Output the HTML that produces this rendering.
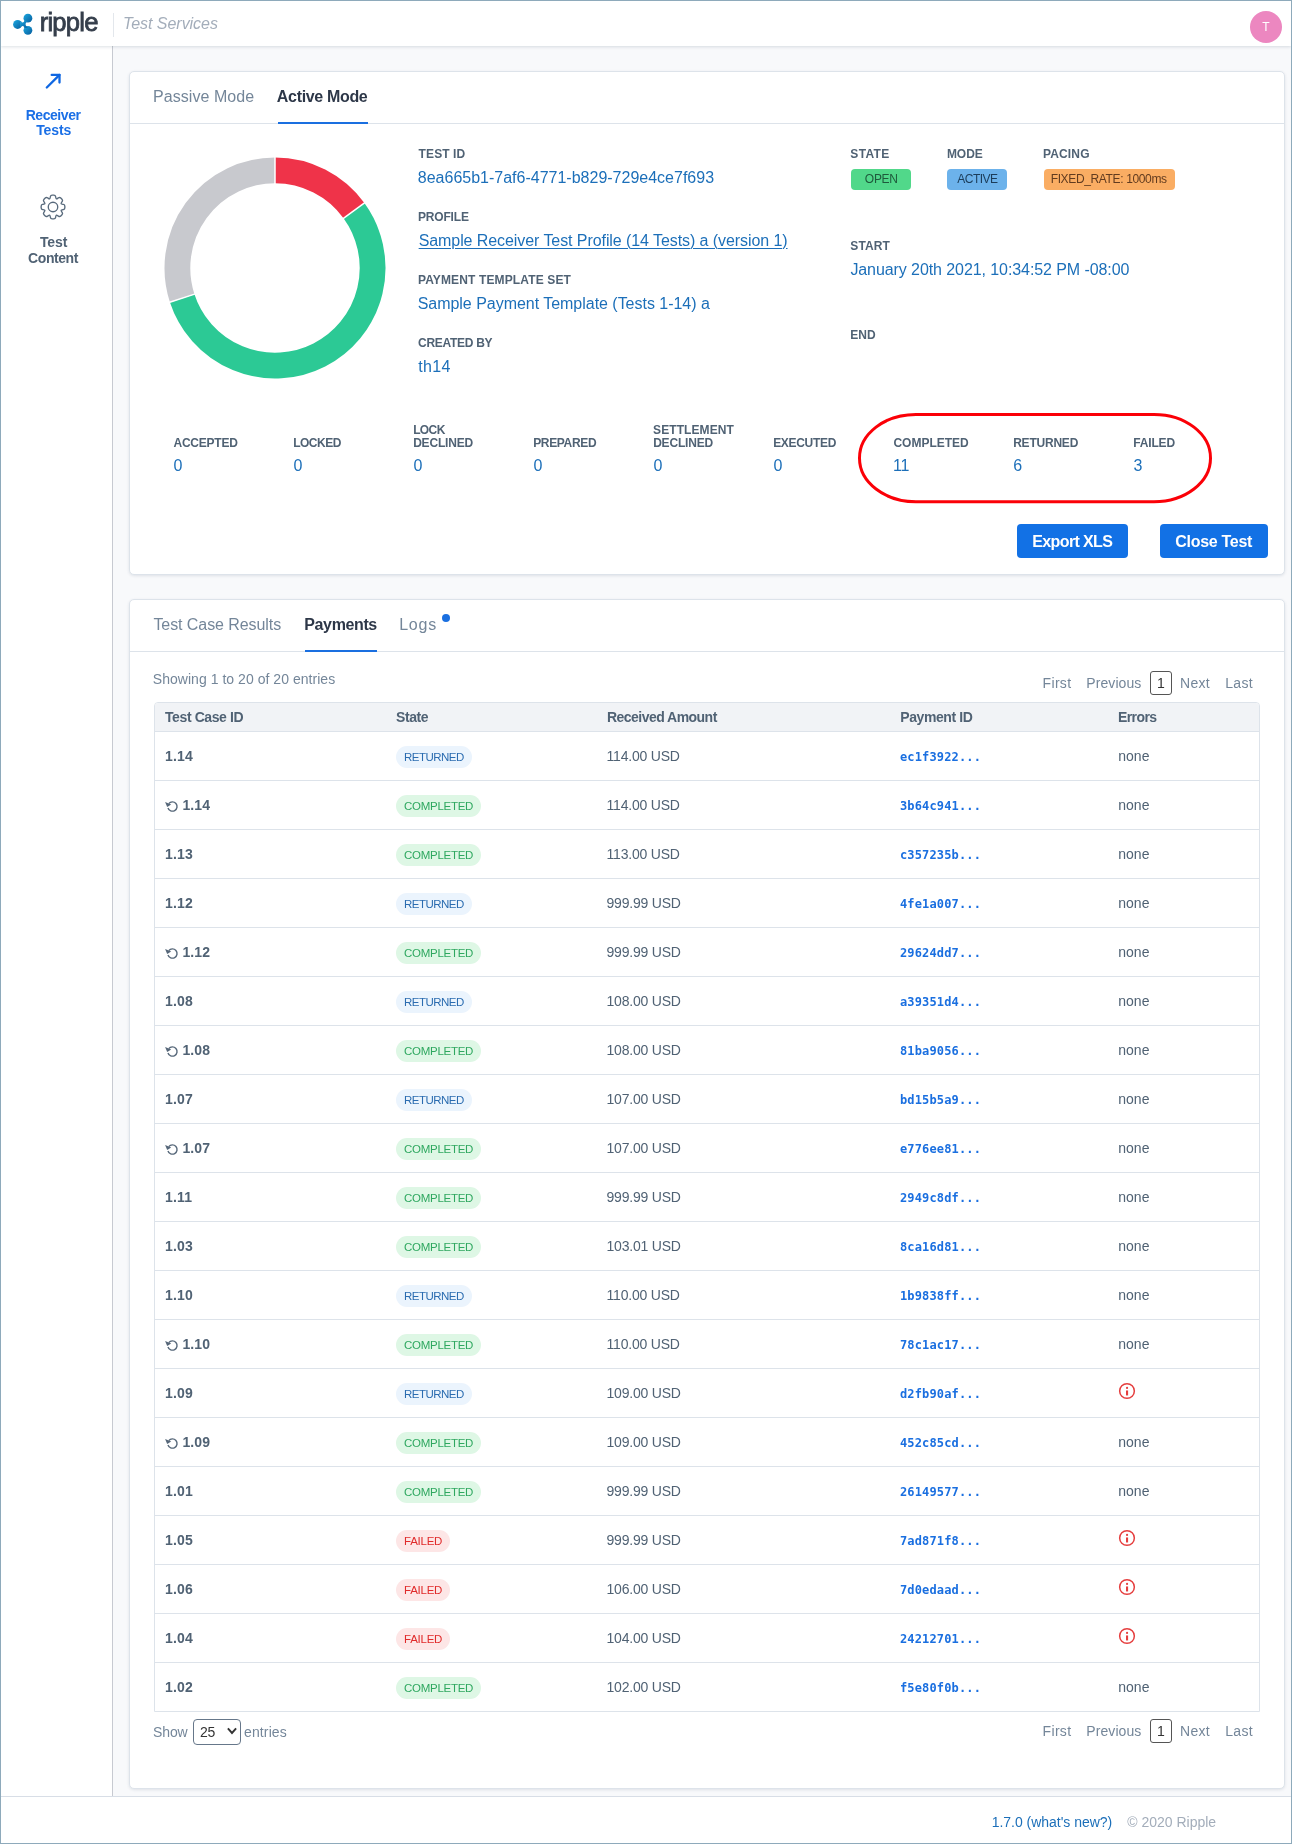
<!DOCTYPE html>
<html lang="en">
<head>
<meta charset="utf-8">
<title>Ripple Test Services</title>
<style>
*{box-sizing:border-box;margin:0;padding:0}
html,body{width:1292px;height:1844px;overflow:hidden;background:#f8f9fb}
body{position:relative;font-family:"Liberation Sans",Arial,sans-serif;color:#506274;font-size:14px}
.frame{position:absolute;left:0;top:0;width:1292px;height:1844px;border:1px solid #8eaabb;z-index:50;pointer-events:none}
header{position:absolute;left:1px;top:1px;width:1290px;height:45px;background:#fff;box-shadow:0 1px 3px rgba(40,60,90,.16);z-index:10}
nav{position:absolute;left:1px;top:46px;width:112px;height:1751px;background:#fff;border-right:1px solid #c7cad1}
footer{position:absolute;left:1px;top:1796px;width:1290px;height:47px;background:#fff;border-top:1px solid #d8dee6;z-index:5}
.abs{position:absolute;white-space:nowrap}
header,nav,section,footer{will-change:transform}
.card{position:absolute;left:129px;width:1156px;background:#fff;border:1px solid #dde3ea;border-radius:5px;box-shadow:0 1px 3px rgba(40,60,90,.12)}
.tabs{position:absolute;left:0;top:0;width:100%;height:52px;border-bottom:1px solid #dde3ea}
.ul{position:absolute;top:50px;height:2px;background:#1a6fe0}
.badge{position:absolute;top:97px;height:21px;border-radius:4px}
.btn{position:absolute;top:452px;height:34px;border-radius:4px;background:#1271e5}
table{position:absolute;left:24px;top:102px;width:1106px;border-collapse:separate;border-spacing:0;table-layout:fixed;border:1px solid #dde3ea;border-radius:4px 4px 0 0}
th{height:28px;background:#f1f3f6;text-align:left;font-size:14px;color:#506274;padding-left:10px;font-weight:bold;letter-spacing:-.4px}
th:first-child{border-radius:3px 0 0 0}th:last-child{border-radius:0 3px 0 0}
td{height:49px;border-top:1px solid #dde3ea;padding-left:10px;font-size:14px;color:#506274;vertical-align:middle}
td.id{font-weight:bold;letter-spacing:.15px}
td.amt{letter-spacing:-.2px;padding-left:9.5px}
td.pid{font-family:"DejaVu Sans Mono","Liberation Mono",monospace;font-weight:bold;font-size:12px;color:#1a6fe0;letter-spacing:.15px;padding-left:9px;padding-top:2px}
td.err{padding-left:9.3px}
.pill{display:inline-block;height:22px;line-height:22px;border-radius:11px;padding:0 0 0 8px;font-size:11.5px;vertical-align:middle;position:relative;top:1px}
.pill.r{background:#ebf4fd;color:#2b6cb0;width:76px;letter-spacing:-.52px}
.pill.c{background:#def7e5;color:#2fa860;width:85px;letter-spacing:-.27px}
.pill.f{background:#fde6e6;color:#e02b2b;width:54px;letter-spacing:-.24px}
.pgbox{position:absolute;width:22px;height:24px;border:1px solid #555;border-radius:3px;text-align:center;line-height:22px;font-size:14px;color:#333;background:#fff}
.retry{display:inline-block;vertical-align:-2.8px;margin-right:3.4px}
.info{display:block;position:relative;top:-2.35px;margin-left:-.5px}
</style>
</head>
<body>

<header>
  <svg class="abs" style="left:11px;top:11px" width="22" height="24" viewBox="12 12 22 24">
    <defs><linearGradient id="rg" x1="0" y1="0" x2="1" y2="1"><stop offset="0" stop-color="#1ba9e1"/><stop offset="1" stop-color="#075c9c"/></linearGradient></defs>
    <g fill="url(#rg)"><circle cx="17.6" cy="24.4" r="4.5"/><circle cx="27.9" cy="18.2" r="4.4"/><circle cx="27.9" cy="30.3" r="4.4"/>
    <path d="M20 21.6 C23 23.4 24 22.5 24.4 20.6 L28 21 C26 22.5 25.6 23.4 25.6 24.3 C25.6 25.3 26 26.2 28 27.6 L24.4 28 C24 26 23 25.2 20 27 Z"/></g>
  </svg>
  <div class="abs" id="logo" style="left:38.65px;top:4.33px;font-size:25.6px;line-height:34px;color:#353e4b;letter-spacing:-0.749px;-webkit-text-stroke:.8px #353e4b;">ripple</div>
  <div class="abs" style="left:112px;top:12px;width:1px;height:24px;background:#e3e7ec"></div>
  <div class="abs" id="ts" style="left:122.01px;top:12.76px;font-size:16px;line-height:20px;color:#a3adba;letter-spacing:-0.044px;font-style:italic;">Test Services</div>
  <div class="abs" style="left:1248.9px;top:10.1px;width:31.8px;height:31.8px;border-radius:16px;background:#ec87c0"></div>
  <div class="abs" id="av" style="left:1261.30px;top:18.94px;font-size:12px;line-height:15px;color:#fff;">T</div>
</header>

<nav>
  <svg class="abs" style="left:43px;top:26px" width="20" height="20" viewBox="44 72 20 20" fill="none" stroke="#0f67e2" stroke-width="2.3" stroke-linecap="round" stroke-linejoin="round"><path d="M46.8 87.5 L59.5 74.9"/><path d="M51.7 74.9 H59.5 V82.6"/></svg>
  <div class="abs" id="nav1a" style="left:24.64px;top:59.55px;font-size:14px;line-height:18px;color:#1a6fe6;font-weight:bold;letter-spacing:-0.440px;">Receiver</div>
  <div class="abs" id="nav1b" style="left:35.16px;top:75.25px;font-size:14px;line-height:18px;color:#1a6fe6;font-weight:bold;letter-spacing:-0.070px;">Tests</div>
  <svg class="abs" style="left:38.4px;top:146.6px" width="28" height="28" viewBox="-14 -14 28 28" fill="none" stroke="#586a7c" stroke-width="1.35" stroke-linejoin="round"><circle r="4.75"/><path d="M-3.36 -8.12 Q-3.00 -8.27 -2.71 -9.85 L-2.62 -10.37 Q-2.35 -11.85 -0.85 -11.85 L0.85 -11.85 Q2.35 -11.85 2.62 -10.37 L2.71 -9.85 Q3.00 -8.27 3.36 -8.12 L3.36 -8.12 Q3.73 -7.97 5.04 -8.88 L5.48 -9.19 Q6.72 -10.04 7.78 -8.98 L8.98 -7.78 Q10.04 -6.72 9.19 -5.48 L8.88 -5.04 Q7.97 -3.73 8.12 -3.36 L8.12 -3.36 Q8.27 -3.00 9.85 -2.71 L10.37 -2.62 Q11.85 -2.35 11.85 -0.85 L11.85 0.85 Q11.85 2.35 10.37 2.62 L9.85 2.71 Q8.27 3.00 8.12 3.36 L8.12 3.36 Q7.97 3.73 8.88 5.04 L9.19 5.48 Q10.04 6.72 8.98 7.78 L7.78 8.98 Q6.72 10.04 5.48 9.19 L5.04 8.88 Q3.73 7.97 3.36 8.12 L3.36 8.12 Q3.00 8.27 2.71 9.85 L2.62 10.37 Q2.35 11.85 0.85 11.85 L-0.85 11.85 Q-2.35 11.85 -2.62 10.37 L-2.71 9.85 Q-3.00 8.27 -3.36 8.12 L-3.36 8.12 Q-3.73 7.97 -5.04 8.88 L-5.48 9.19 Q-6.72 10.04 -7.78 8.98 L-8.98 7.78 Q-10.04 6.72 -9.19 5.48 L-8.88 5.04 Q-7.97 3.73 -8.12 3.36 L-8.12 3.36 Q-8.27 3.00 -9.85 2.71 L-10.37 2.62 Q-11.85 2.35 -11.85 0.85 L-11.85 -0.85 Q-11.85 -2.35 -10.37 -2.62 L-9.85 -2.71 Q-8.27 -3.00 -8.12 -3.36 L-8.12 -3.36 Q-7.97 -3.73 -8.88 -5.04 L-9.19 -5.48 Q-10.04 -6.72 -8.98 -7.78 L-7.78 -8.98 Q-6.72 -10.04 -5.48 -9.19 L-5.04 -8.88 Q-3.73 -7.97 -3.36 -8.12 Z"/></svg>
  <div class="abs" id="nav2a" style="left:38.94px;top:187.35px;font-size:14px;line-height:18px;color:#506274;font-weight:bold;letter-spacing:-0.078px;">Test</div>
  <div class="abs" id="nav2b" style="left:27.09px;top:203.45px;font-size:14px;line-height:18px;color:#506274;font-weight:bold;letter-spacing:-0.429px;">Content</div>
</nav>

<main>
<section class="card" style="top:71px;height:504px">
  <div class="tabs"></div>
  <div class="abs" id="t1" style="left:23.08px;top:15.16px;font-size:16px;line-height:20px;color:#748699;letter-spacing:0.045px;">Passive Mode</div>
  <div class="abs" id="t2" style="left:146.87px;top:15.16px;font-size:16px;line-height:20px;color:#2d3748;font-weight:bold;letter-spacing:-0.333px;">Active Mode</div>
  <div class="ul" style="left:147.5px;width:90px"></div>
  <svg class="abs" style="left:33px;top:84.1px" width="224" height="224" viewBox="-112 -112 224 224">
    <g fill="none" stroke-width="25.8">
      <path d="M0.00 -97.60 A97.6 97.6 0 0 1 78.96 -57.37" stroke="#ef3349"/>
      <path d="M78.96 -57.37 A97.6 97.6 0 1 1 -92.82 30.16" stroke="#2cc995"/>
      <path d="M-92.82 30.16 A97.6 97.6 0 0 1 -0.00 -97.60" stroke="#c8c9ce"/>
      <path d="M0.00 -83.70 L0.00 -111.50" stroke="#fff" stroke-width="1.5"/><path d="M67.71 -49.20 L90.21 -65.54" stroke="#fff" stroke-width="1.5"/><path d="M-79.60 25.86 L-106.04 34.46" stroke="#fff" stroke-width="1.5"/>
    </g>
  </svg>
  <div class="abs" id="l1" style="left:288.61px;top:76.44px;font-size:12px;line-height:13px;color:#506274;font-weight:bold;letter-spacing:0.094px;">TEST ID</div>
  <div class="abs" id="v1" style="left:287.79px;top:95.66px;font-size:16px;line-height:20px;color:#1c6fb9;">8ea665b1-7af6-4771-b829-729e4ce7f693</div>
  <div class="abs" id="l2" style="left:287.89px;top:139.44px;font-size:12px;line-height:13px;color:#506274;font-weight:bold;letter-spacing:-0.158px;">PROFILE</div>
  <div class="abs" id="v2" style="left:288.65px;top:158.66px;font-size:16px;line-height:20px;color:#1c6fb9;letter-spacing:-0.075px;text-decoration:underline;text-decoration-thickness:1px;text-underline-offset:2px;">Sample Receiver Test Profile (14 Tests) a (version 1)</div>
  <div class="abs" id="l3" style="left:287.89px;top:202.44px;font-size:12px;line-height:13px;color:#506274;font-weight:bold;letter-spacing:0.137px;">PAYMENT TEMPLATE SET</div>
  <div class="abs" id="v3" style="left:287.67px;top:221.66px;font-size:16px;line-height:20px;color:#1c6fb9;letter-spacing:-0.028px;">Sample Payment Template (Tests 1-14) a</div>
  <div class="abs" id="l4" style="left:288.07px;top:265.44px;font-size:12px;line-height:13px;color:#506274;font-weight:bold;letter-spacing:-0.285px;">CREATED BY</div>
  <div class="abs" id="v4" style="left:288.33px;top:284.66px;font-size:16px;line-height:20px;color:#1c6fb9;letter-spacing:0.292px;">th14</div>
  <div class="abs" id="l5" style="left:720.35px;top:76.44px;font-size:12px;line-height:13px;color:#506274;font-weight:bold;letter-spacing:0.337px;">STATE</div>
  <div class="abs" id="l6" style="left:816.89px;top:76.44px;font-size:12px;line-height:13px;color:#506274;font-weight:bold;letter-spacing:-0.031px;">MODE</div>
  <div class="abs" id="l7" style="left:912.88px;top:76.44px;font-size:12px;line-height:13px;color:#506274;font-weight:bold;letter-spacing:0.168px;">PACING</div>
  <div class="badge" style="left:721px;width:60px;background:#51d88a"></div>
  <div class="badge" style="left:817px;width:60px;background:#6cb2eb"></div>
  <div class="badge" style="left:913.5px;width:131.5px;background:#faad63"></div>
  <div class="abs" id="b1" style="left:734.86px;top:100.14px;font-size:12px;line-height:15px;color:#1f5a3c;letter-spacing:-0.293px;">OPEN</div>
  <div class="abs" id="b2" style="left:827.33px;top:100.14px;font-size:12px;line-height:15px;color:#1c3d5a;letter-spacing:-0.523px;">ACTIVE</div>
  <div class="abs" id="b3" style="left:920.68px;top:100.14px;font-size:12px;line-height:15px;color:#613b1f;letter-spacing:-0.358px;">FIXED_RATE: 1000ms</div>
  <div class="abs" id="l8" style="left:720.35px;top:168.34px;font-size:12px;line-height:13px;color:#506274;font-weight:bold;letter-spacing:0.075px;">START</div>
  <div class="abs" id="v8" style="left:720.38px;top:187.96px;font-size:16px;line-height:20px;color:#1c6fb9;letter-spacing:-0.082px;">January 20th 2021, 10:34:52 PM -08:00</div>
  <div class="abs" id="l9" style="left:720.36px;top:256.84px;font-size:12px;line-height:13px;color:#506274;font-weight:bold;letter-spacing:-0.036px;">END</div>
  <div class="abs" id="s0" style="left:43.46px;top:365.04px;font-size:12px;line-height:13px;color:#506274;font-weight:bold;letter-spacing:-0.233px;">ACCEPTED</div>
  <div class="abs" id="sv0" style="left:43.58px;top:384.26px;font-size:16px;line-height:20px;color:#1c6fb9;">0</div>
  <div class="abs" id="s1" style="left:163.14px;top:365.04px;font-size:12px;line-height:13px;color:#506274;font-weight:bold;letter-spacing:-0.490px;">LOCKED</div>
  <div class="abs" id="sv1" style="left:163.51px;top:384.26px;font-size:16px;line-height:20px;color:#1c6fb9;">0</div>
  <div class="abs" id="s2a" style="left:283.14px;top:351.94px;font-size:12px;line-height:13px;color:#506274;font-weight:bold;letter-spacing:-0.605px;">LOCK</div>
  <div class="abs" id="s2b" style="left:283.14px;top:365.04px;font-size:12px;line-height:13px;color:#506274;font-weight:bold;letter-spacing:-0.176px;">DECLINED</div>
  <div class="abs" id="sv2" style="left:283.51px;top:384.26px;font-size:16px;line-height:20px;color:#1c6fb9;">0</div>
  <div class="abs" id="s3" style="left:403.14px;top:365.04px;font-size:12px;line-height:13px;color:#506274;font-weight:bold;letter-spacing:-0.334px;">PREPARED</div>
  <div class="abs" id="sv3" style="left:403.51px;top:384.26px;font-size:16px;line-height:20px;color:#1c6fb9;">0</div>
  <div class="abs" id="s4a" style="left:523.05px;top:351.94px;font-size:12px;line-height:13px;color:#506274;font-weight:bold;letter-spacing:0.091px;">SETTLEMENT</div>
  <div class="abs" id="s4b" style="left:523.14px;top:365.04px;font-size:12px;line-height:13px;color:#506274;font-weight:bold;letter-spacing:-0.180px;">DECLINED</div>
  <div class="abs" id="sv4" style="left:523.51px;top:384.26px;font-size:16px;line-height:20px;color:#1c6fb9;">0</div>
  <div class="abs" id="s5" style="left:643.14px;top:365.04px;font-size:12px;line-height:13px;color:#506274;font-weight:bold;letter-spacing:-0.309px;">EXECUTED</div>
  <div class="abs" id="sv5" style="left:643.51px;top:384.26px;font-size:16px;line-height:20px;color:#1c6fb9;">0</div>
  <div class="abs" id="s6" style="left:763.45px;top:365.04px;font-size:12px;line-height:13px;color:#506274;font-weight:bold;letter-spacing:-0.001px;">COMPLETED</div>
  <div class="abs" id="sv6" style="left:763.01px;top:384.26px;font-size:16px;line-height:20px;color:#1c6fb9;letter-spacing:-0.107px;">11</div>
  <div class="abs" id="s7" style="left:883.14px;top:365.04px;font-size:12px;line-height:13px;color:#506274;font-weight:bold;letter-spacing:-0.209px;">RETURNED</div>
  <div class="abs" id="sv7" style="left:883.32px;top:384.26px;font-size:16px;line-height:20px;color:#1c6fb9;">6</div>
  <div class="abs" id="s8" style="left:1003.17px;top:365.04px;font-size:12px;line-height:13px;color:#506274;font-weight:bold;letter-spacing:-0.147px;">FAILED</div>
  <div class="abs" id="sv8" style="left:1003.40px;top:384.26px;font-size:16px;line-height:20px;color:#1c6fb9;">3</div>
  <svg class="abs" style="left:726px;top:339px" width="358" height="95" viewBox="856 411 358 95" fill="none"><rect x="859.5" y="414.4" width="351" height="87.4" rx="56.5" ry="43.5" stroke="#fb0007" stroke-width="3"/></svg>
  <div class="btn" style="left:887px;width:111px"></div>
  <div class="btn" style="left:1030px;width:108px"></div>
  <div class="abs" id="bt1" style="left:902.25px;top:459.96px;font-size:16px;line-height:20px;color:#fff;font-weight:bold;letter-spacing:-0.618px;">Export XLS</div>
  <div class="abs" id="bt2" style="left:1045.30px;top:459.96px;font-size:16px;line-height:20px;color:#fff;font-weight:bold;letter-spacing:-0.298px;">Close Test</div>
</section>

<section class="card" style="top:599px;height:1190px">
  <div class="tabs"></div>
  <div class="abs" id="t3" style="left:23.44px;top:14.96px;font-size:16px;line-height:20px;color:#748699;letter-spacing:-0.076px;">Test Case Results</div>
  <div class="abs" id="t4" style="left:174.29px;top:14.96px;font-size:16px;line-height:20px;color:#2d3748;font-weight:bold;letter-spacing:-0.375px;">Payments</div>
  <div class="ul" style="left:175px;width:72px"></div>
  <div class="abs" id="t5" style="left:269.13px;top:14.96px;font-size:16px;line-height:20px;color:#748699;letter-spacing:0.778px;">Logs</div>
  <div class="abs" style="left:312.2px;top:14.2px;width:7.6px;height:7.6px;border-radius:4px;background:#1a6fe0"></div>
  <div class="abs" id="show1" style="left:22.79px;top:70.45px;font-size:14px;line-height:18px;color:#748699;letter-spacing:0.037px;">Showing 1 to 20 of 20 entries</div>
  <div class="abs" id="pf1" style="left:912.59px;top:74.45px;font-size:14px;line-height:18px;color:#748699;letter-spacing:0.324px;">First</div>
  <div class="abs" id="pp1" style="left:956.32px;top:74.45px;font-size:14px;line-height:18px;color:#748699;letter-spacing:0.072px;">Previous</div>
  <div class="pgbox" style="left:1020px;top:71px">1</div>
  <div class="abs" id="pn1" style="left:1050.12px;top:74.45px;font-size:14px;line-height:18px;color:#748699;letter-spacing:0.275px;">Next</div>
  <div class="abs" id="pl1" style="left:1095.32px;top:74.45px;font-size:14px;line-height:18px;color:#748699;letter-spacing:0.276px;">Last</div>
  <div class="abs" id="pf2" style="left:912.59px;top:1122.45px;font-size:14px;line-height:18px;color:#748699;letter-spacing:0.324px;">First</div>
  <div class="abs" id="pp2" style="left:956.32px;top:1122.45px;font-size:14px;line-height:18px;color:#748699;letter-spacing:0.072px;">Previous</div>
  <div class="pgbox" style="left:1020px;top:1119px">1</div>
  <div class="abs" id="pn2" style="left:1050.12px;top:1122.45px;font-size:14px;line-height:18px;color:#748699;letter-spacing:0.275px;">Next</div>
  <div class="abs" id="pl2" style="left:1095.32px;top:1122.45px;font-size:14px;line-height:18px;color:#748699;letter-spacing:0.276px;">Last</div>
  <table>
    <colgroup><col style="width:231px"><col style="width:211px"><col style="width:294px"><col style="width:218px"><col></colgroup>
    <thead><tr><th>Test Case ID</th><th>State</th><th style="letter-spacing:-.53px">Received Amount</th><th style="padding-left:9.2px">Payment ID</th><th style="padding-left:9px;letter-spacing:-.6px">Errors</th></tr></thead>
    <tbody>
      <tr><td class="id">1.14</td><td><span class="pill r">RETURNED</span></td><td class="amt">114.00 USD</td><td class="pid">ec1f3922...</td><td class="err">none</td></tr>
      <tr><td class="id"><svg class="retry" width="14" height="13" viewBox="165 800 14 13"><path d="M167.98 807.94 A4.65 4.65 0 1 0 168.75 803.6" fill="none" stroke="#566779" stroke-width="1.4"/><path d="M165.1 802 L171.2 804.5 L167.2 806.9 Z" fill="#566779"/></svg>1.14</td><td><span class="pill c">COMPLETED</span></td><td class="amt">114.00 USD</td><td class="pid">3b64c941...</td><td class="err">none</td></tr>
      <tr><td class="id">1.13</td><td><span class="pill c">COMPLETED</span></td><td class="amt">113.00 USD</td><td class="pid">c357235b...</td><td class="err">none</td></tr>
      <tr><td class="id">1.12</td><td><span class="pill r">RETURNED</span></td><td class="amt">999.99 USD</td><td class="pid">4fe1a007...</td><td class="err">none</td></tr>
      <tr><td class="id"><svg class="retry" width="14" height="13" viewBox="165 800 14 13"><path d="M167.98 807.94 A4.65 4.65 0 1 0 168.75 803.6" fill="none" stroke="#566779" stroke-width="1.4"/><path d="M165.1 802 L171.2 804.5 L167.2 806.9 Z" fill="#566779"/></svg>1.12</td><td><span class="pill c">COMPLETED</span></td><td class="amt">999.99 USD</td><td class="pid">29624dd7...</td><td class="err">none</td></tr>
      <tr><td class="id">1.08</td><td><span class="pill r">RETURNED</span></td><td class="amt">108.00 USD</td><td class="pid">a39351d4...</td><td class="err">none</td></tr>
      <tr><td class="id"><svg class="retry" width="14" height="13" viewBox="165 800 14 13"><path d="M167.98 807.94 A4.65 4.65 0 1 0 168.75 803.6" fill="none" stroke="#566779" stroke-width="1.4"/><path d="M165.1 802 L171.2 804.5 L167.2 806.9 Z" fill="#566779"/></svg>1.08</td><td><span class="pill c">COMPLETED</span></td><td class="amt">108.00 USD</td><td class="pid">81ba9056...</td><td class="err">none</td></tr>
      <tr><td class="id">1.07</td><td><span class="pill r">RETURNED</span></td><td class="amt">107.00 USD</td><td class="pid">bd15b5a9...</td><td class="err">none</td></tr>
      <tr><td class="id"><svg class="retry" width="14" height="13" viewBox="165 800 14 13"><path d="M167.98 807.94 A4.65 4.65 0 1 0 168.75 803.6" fill="none" stroke="#566779" stroke-width="1.4"/><path d="M165.1 802 L171.2 804.5 L167.2 806.9 Z" fill="#566779"/></svg>1.07</td><td><span class="pill c">COMPLETED</span></td><td class="amt">107.00 USD</td><td class="pid">e776ee81...</td><td class="err">none</td></tr>
      <tr><td class="id">1.11</td><td><span class="pill c">COMPLETED</span></td><td class="amt">999.99 USD</td><td class="pid">2949c8df...</td><td class="err">none</td></tr>
      <tr><td class="id">1.03</td><td><span class="pill c">COMPLETED</span></td><td class="amt">103.01 USD</td><td class="pid">8ca16d81...</td><td class="err">none</td></tr>
      <tr><td class="id">1.10</td><td><span class="pill r">RETURNED</span></td><td class="amt">110.00 USD</td><td class="pid">1b9838ff...</td><td class="err">none</td></tr>
      <tr><td class="id"><svg class="retry" width="14" height="13" viewBox="165 800 14 13"><path d="M167.98 807.94 A4.65 4.65 0 1 0 168.75 803.6" fill="none" stroke="#566779" stroke-width="1.4"/><path d="M165.1 802 L171.2 804.5 L167.2 806.9 Z" fill="#566779"/></svg>1.10</td><td><span class="pill c">COMPLETED</span></td><td class="amt">110.00 USD</td><td class="pid">78c1ac17...</td><td class="err">none</td></tr>
      <tr><td class="id">1.09</td><td><span class="pill r">RETURNED</span></td><td class="amt">109.00 USD</td><td class="pid">d2fb90af...</td><td class="err"><svg class="info" width="18" height="18" viewBox="0 0 18 18" fill="none"><circle cx="9" cy="9" r="7.35" stroke="#e53e3e" stroke-width="1.5"/><circle cx="9.05" cy="5.95" r="1.1" fill="#e53e3e"/><path d="M9.05 8.45 V13.45" stroke="#e53e3e" stroke-width="2.1"/></svg></td></tr>
      <tr><td class="id"><svg class="retry" width="14" height="13" viewBox="165 800 14 13"><path d="M167.98 807.94 A4.65 4.65 0 1 0 168.75 803.6" fill="none" stroke="#566779" stroke-width="1.4"/><path d="M165.1 802 L171.2 804.5 L167.2 806.9 Z" fill="#566779"/></svg>1.09</td><td><span class="pill c">COMPLETED</span></td><td class="amt">109.00 USD</td><td class="pid">452c85cd...</td><td class="err">none</td></tr>
      <tr><td class="id">1.01</td><td><span class="pill c">COMPLETED</span></td><td class="amt">999.99 USD</td><td class="pid">26149577...</td><td class="err">none</td></tr>
      <tr><td class="id">1.05</td><td><span class="pill f">FAILED</span></td><td class="amt">999.99 USD</td><td class="pid">7ad871f8...</td><td class="err"><svg class="info" width="18" height="18" viewBox="0 0 18 18" fill="none"><circle cx="9" cy="9" r="7.35" stroke="#e53e3e" stroke-width="1.5"/><circle cx="9.05" cy="5.95" r="1.1" fill="#e53e3e"/><path d="M9.05 8.45 V13.45" stroke="#e53e3e" stroke-width="2.1"/></svg></td></tr>
      <tr><td class="id">1.06</td><td><span class="pill f">FAILED</span></td><td class="amt">106.00 USD</td><td class="pid">7d0edaad...</td><td class="err"><svg class="info" width="18" height="18" viewBox="0 0 18 18" fill="none"><circle cx="9" cy="9" r="7.35" stroke="#e53e3e" stroke-width="1.5"/><circle cx="9.05" cy="5.95" r="1.1" fill="#e53e3e"/><path d="M9.05 8.45 V13.45" stroke="#e53e3e" stroke-width="2.1"/></svg></td></tr>
      <tr><td class="id">1.04</td><td><span class="pill f">FAILED</span></td><td class="amt">104.00 USD</td><td class="pid">24212701...</td><td class="err"><svg class="info" width="18" height="18" viewBox="0 0 18 18" fill="none"><circle cx="9" cy="9" r="7.35" stroke="#e53e3e" stroke-width="1.5"/><circle cx="9.05" cy="5.95" r="1.1" fill="#e53e3e"/><path d="M9.05 8.45 V13.45" stroke="#e53e3e" stroke-width="2.1"/></svg></td></tr>
      <tr><td class="id">1.02</td><td><span class="pill c">COMPLETED</span></td><td class="amt">102.00 USD</td><td class="pid">f5e80f0b...</td><td class="err">none</td></tr>
    </tbody>
  </table>
  <div class="abs" id="show2" style="left:22.92px;top:1123.45px;font-size:14px;line-height:18px;color:#748699;letter-spacing:-0.070px;">Show</div>
  <div class="abs" style="left:63px;top:1119px;width:48px;height:26px;border:1px solid #66778a;border-radius:4px;background:#fff"><svg class="abs" style="left:33.2px;top:7.4px" width="10" height="9" viewBox="0 0 10 9" fill="none" stroke="#333" stroke-width="1.9"><path d="M0.9 1.4 L5 6 L9.1 1.4"/></svg></div>
  <div class="abs" id="selv" style="left:70.02px;top:1123.45px;font-size:14px;line-height:18px;color:#333;letter-spacing:-0.225px;">25</div>
  <div class="abs" id="ent2" style="left:114.02px;top:1123.45px;font-size:14px;line-height:18px;color:#748699;letter-spacing:0.122px;">entries</div>
</section>
</main>

<footer>
  <div class="abs" id="f1" style="left:990.74px;top:15.75px;font-size:14px;line-height:18px;color:#1c6fb9;letter-spacing:-0.025px;">1.7.0 (what's new?)</div>
  <div class="abs" id="f2" style="left:1126.33px;top:15.75px;font-size:14px;line-height:18px;color:#a3adba;letter-spacing:-0.008px;">© 2020 Ripple</div>
</footer>
<div class="frame"></div>
</body>
</html>
